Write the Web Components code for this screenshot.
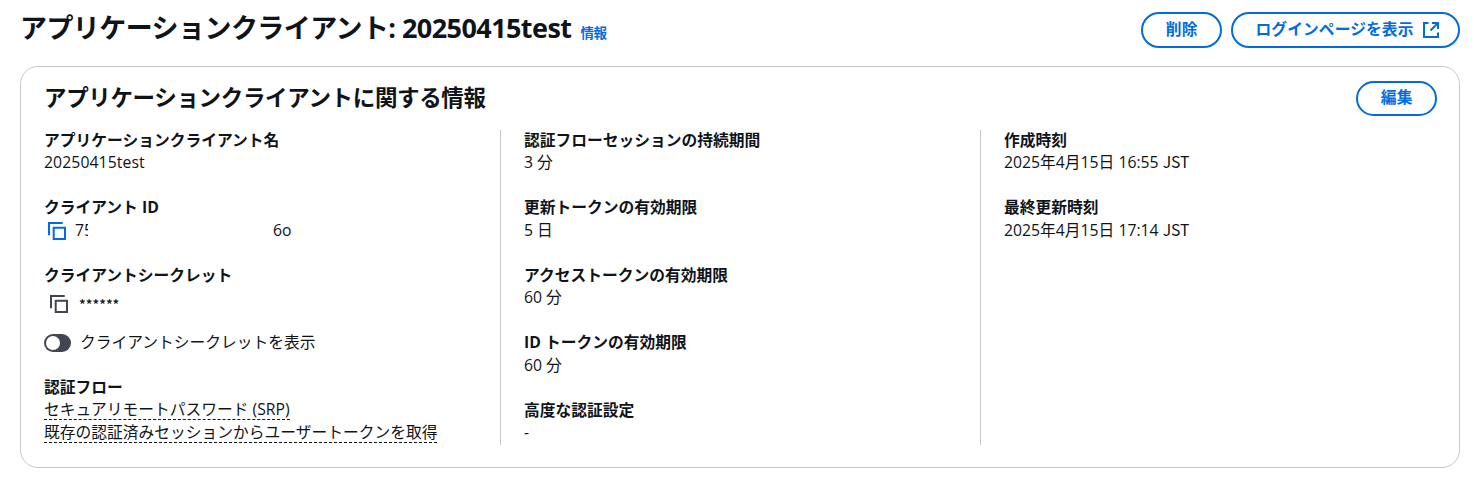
<!DOCTYPE html>
<html lang="ja">
<head>
<meta charset="utf-8">
<title>アプリケーションクライアント</title>
<style>
html, body { margin: 0; }
body {
  background: #fff; color: #0f141a; width: 1474px; height: 478px; overflow: hidden;
  font: 400 15.75px/22.5px "Open Sans", "Noto Sans CJK JP", sans-serif;
}
</style>
</head>
<body>
<client-page></client-page>
<script>
const define = (name, html) => {
  const t = document.createElement('template');
  t.innerHTML = html;
  customElements.define(name, class extends HTMLElement {
    constructor() {
      super();
      this.attachShadow({ mode: 'open' }).append(t.content.cloneNode(true));
    }
  });
};

define('ui-button', `<style>
:host { display: inline-flex; box-sizing: border-box; height: 36px; padding: 4px 22.5px 0; border: 2px solid #006ce0; border-radius: 22px; color: #006ce0; font-weight: 700; align-items: flex-start; gap: 8px; white-space: nowrap; line-height: 22.5px; letter-spacing: .005em; }
::slotted(svg) { display: block; margin: 3px -4px 0 0; }
</style><slot></slot>`);

define('ui-field', `<style>
:host { display: block; }
.label { font-weight: 700; height: 22.5px; white-space: nowrap; }
.value { white-space: nowrap; }
</style><div class="label"><slot name="label"></slot></div><div class="value"><slot></slot></div>`);

define('copy-icon', `<style>
:host { display: block; width: 18px; height: 18px; color: #006ce0; }
svg { display: block; }
</style><svg width="18" height="18" viewBox="0 0 18 18" fill="none" stroke="currentColor" stroke-width="2"><path d="M1 13.2V1H14.7"/><path d="M5.7 5.7H17V17H5.7Z"/></svg>`);

define('copy-value', `<style>
:host { display: flex; height: 22.5px; padding-left: 4px; }
copy-icon { margin: 3px 9px 0 0; }
.head { width: 12.5px; overflow: hidden; }
.tail { margin-left: 185.5px; }
</style><copy-icon></copy-icon><span class="head">75</span><span class="tail">6o</span>`);

define('secret-value', `<style>
:host { display: flex; height: 34px; padding-left: 6px; }
copy-icon { color: #424650; margin: 9px 11px 0 0; }
span { font: 500 13.9px/22.5px "Noto Sans CJK JP", sans-serif; padding-top: 7px; }
</style><copy-icon></copy-icon><span>******</span>`);

define('ui-toggle', `<style>
:host { display: flex; margin-top: 10.5px; height: 22.5px; gap: 9px; align-items: flex-start; }
.track { width: 27px; height: 18px; border-radius: 9px; background: #424650; margin-top: 3px; display: flex; align-items: center; }
.knob { width: 14px; height: 14px; border-radius: 50%; background: #fff; margin-left: 2px; }
</style><span class="track"><span class="knob"></span></span><span><slot></slot></span>`);

define('dashed-text', `<style>
:host { display: block; height: 22.5px; }
span { display: inline-block; box-sizing: border-box; height: 22px; border-bottom: 1px dashed #0f141a; }
</style><span><slot></slot></span>`);

define('date-value', `<style>
:host { display: inline; }
.zone { font-family: "Noto Sans CJK JP", sans-serif; line-height: 1; }
</style><slot></slot> <span class="zone">JST</span>`);

define('ui-column', `<style>
:host { display: flex; flex-direction: column; gap: 22.5px; height: 315px; box-sizing: border-box; }
:host([divided]) { border-left: 1px solid #c6c6cd; padding-left: 23px; }
::slotted(ui-field:first-child) { margin-top: -1.1px; }
</style><slot></slot>`);

define('ui-card', `<style>
:host { display: block; box-sizing: border-box; height: 402px; border: 1px solid #c6c6cd; border-radius: 18px; padding: 14px 22px 0 23px; }
header { display: flex; justify-content: space-between; height: 49px; align-items: flex-start; }
h2 { margin: 3px 0 0; font-size: 22.5px; line-height: 27px; letter-spacing: -.0155em; font-weight: 700; }
.grid { display: grid; grid-template-columns: 456px 480px 1fr; }
</style><header><h2><slot name="title"></slot></h2><slot name="action"></slot></header><div class="grid"><slot></slot></div>`);

define('client-page', `<style>
:host { display: block; padding: 12px 14px 0 20px; }
header { display: flex; justify-content: space-between; height: 54px; }
.title { display: flex; align-items: baseline; height: 34px; margin-top: -1px; }
h1 { margin: 0; font-size: 27px; line-height: 33px; letter-spacing: -.0212em; font-weight: 700; white-space: nowrap; }
.info { color: #006ce0; font-size: 13.5px; font-weight: 700; margin-left: 9px; letter-spacing: -.02em; }
.actions { display: flex; gap: 9px; }
ui-button.edit { height: 35px; padding-top: 3px; }
.num { letter-spacing: .006em; }
</style>
<header>
  <div class="title"><h1>アプリケーションクライアント: 20250415test</h1><span class="info">情報</span></div>
  <div class="actions">
    <ui-button>削除</ui-button>
    <ui-button>ログインページを表示<svg width="18" height="18" viewBox="0 0 18 18" fill="none" stroke="#006ce0" stroke-width="2"><path d="M6.5 2H2V16H16V11.5"/><path d="M10 2H16V8M16 2L8.5 9.5"/></svg></ui-button>
  </div>
</header>
<ui-card>
  <span slot="title">アプリケーションクライアントに関する情報</span>
  <ui-button slot="action" class="edit">編集</ui-button>
  <ui-column>
    <ui-field><span slot="label">アプリケーションクライアント名</span><span class="num">20250415test</span></ui-field>
    <ui-field><span slot="label">クライアント ID</span><copy-value></copy-value></ui-field>
    <ui-field><span slot="label">クライアントシークレット</span><secret-value></secret-value><ui-toggle>クライアントシークレットを表示</ui-toggle></ui-field>
    <ui-field><span slot="label">認証フロー</span><dashed-text>セキュアリモートパスワード (SRP)</dashed-text><dashed-text>既存の認証済みセッションからユーザートークンを取得</dashed-text></ui-field>
  </ui-column>
  <ui-column divided>
    <ui-field><span slot="label">認証フローセッションの持続期間</span>3 分</ui-field>
    <ui-field><span slot="label">更新トークンの有効期限</span>5 日</ui-field>
    <ui-field><span slot="label">アクセストークンの有効期限</span>60 分</ui-field>
    <ui-field><span slot="label">ID トークンの有効期限</span>60 分</ui-field>
    <ui-field><span slot="label">高度な認証設定</span>-</ui-field>
  </ui-column>
  <ui-column divided>
    <ui-field><span slot="label">作成時刻</span><date-value>2025年4月15日 16:55</date-value></ui-field>
    <ui-field><span slot="label">最終更新時刻</span><date-value>2025年4月15日 17:14</date-value></ui-field>
  </ui-column>
</ui-card>`);
</script>
</body>
</html>
